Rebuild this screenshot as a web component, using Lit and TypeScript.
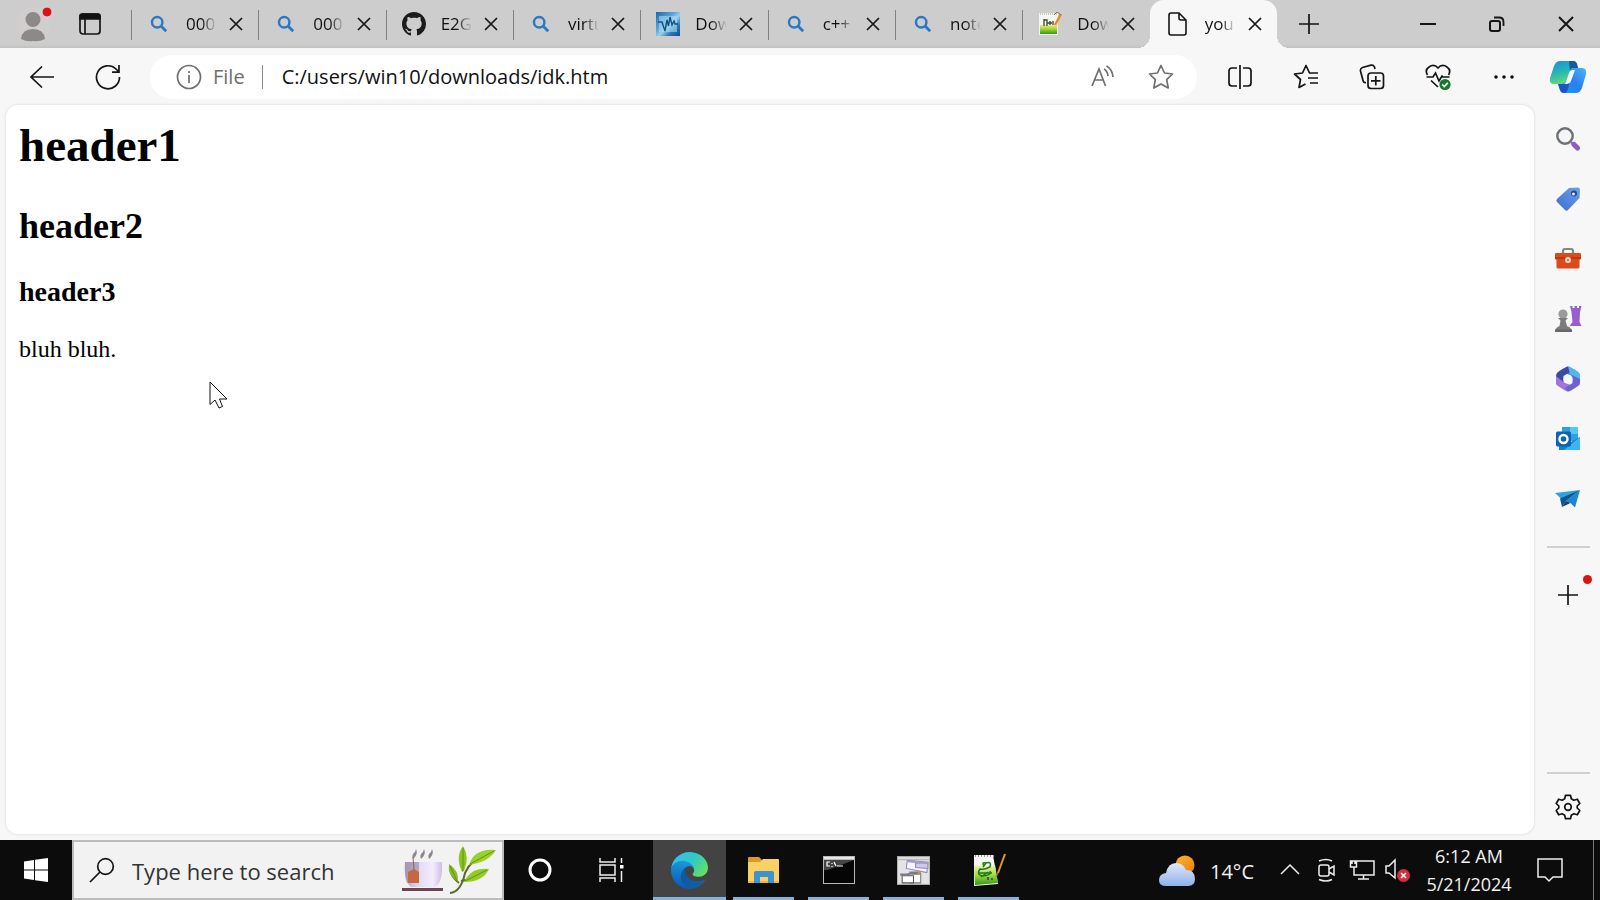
import { LitElement, html, css, svg, nothing, TemplateResult } from "lit";
import { customElement, property } from "lit/decorators.js";

const icon = (size: number, box: string, body: unknown, cls = "line") =>
  html`<svg class=${cls} width=${size} height=${size} viewBox=${box} aria-hidden="true">${body}</svg>`;

const closeIcon = icon(14, "0 0 14 14", svg`<path d="M1 1L13 13M13 1L1 13"/>`);

const searchFav = icon(18, "0 0 20 20", svg`
  <circle cx="8" cy="8" r="5.800" fill="none" stroke="#2b78c5" stroke-width="2.700"/>
  <path d="M12 12L18 18" stroke="#2b78c5" stroke-width="3.200"/>`, "art");

const githubFav = icon(24, "0 0 16 16", svg`
  <path fill="#1b1b1b" d="M8 0C3.58 0 0 3.58 0 8c0 3.54 2.29 6.53 5.47 7.59.4.07.55-.17.55-.38 0-.19-.01-.82-.01-1.49-2.01.37-2.53-.49-2.69-.94-.09-.23-.48-.94-.82-1.13-.28-.15-.68-.52-.01-.53.63-.01 1.08.58 1.23.82.72 1.21 1.87.87 2.33.66.07-.52.28-.87.51-1.07-1.78-.2-3.64-.89-3.64-3.95 0-.87.31-1.59.82-2.15-.08-.2-.36-1.02.08-2.12 0 0 .67-.21 2.2.82.64-.18 1.32-.27 2-.27s1.36.09 2 .27c1.53-1.04 2.2-.82 2.2-.82.44 1.1.16 1.92.08 2.12.51.56.82 1.27.82 2.15 0 3.07-1.87 3.75-3.65 3.95.29.25.54.73.54 1.48 0 1.07-.01 1.93-.01 2.2 0 .21.15.46.55.38A8.01 8.01 0 0 0 16 8c0-4.42-3.58-8-8-8z"/>`, "art");

const waveFav = icon(24, "0 0 24 24", svg`
  <defs><linearGradient id="w" x1="0" y1="0" x2="1" y2="1">
    <stop offset="0" stop-color="#1a66a4"/><stop offset=".4" stop-color="#5ba7dc"/>
    <stop offset=".55" stop-color="#9ad0ee"/><stop offset=".75" stop-color="#2a78b8"/><stop offset="1" stop-color="#174f8c"/>
  </linearGradient></defs>
  <rect width="24" height="24" fill="url(#w)"/>
  <rect x="3" y="4" width="18" height="16" fill="#a8daf0" opacity=".6"/>
  <path d="M2 10H6L9 19L11 8L12.500 14L14 5L16 13L18 9L19 12H22" fill="none" stroke="#12527f" stroke-width="1.400"/>`, "art");

const notepadFav = icon(24, "0 0 24 24", svg`
  <defs><linearGradient id="n" x1="0" y1="0" x2="0" y2="1">
    <stop offset="0" stop-color="#e9f07c"/><stop offset=".5" stop-color="#9bd02c"/><stop offset="1" stop-color="#2f9a1c"/>
  </linearGradient></defs>
  <path d="M1 1H20V23H1z" fill="#f4f6f0"/>
  <path d="M2 13H19V22H2z" fill="url(#n)"/>
  <path d="M2 2H19" stroke="#999" stroke-width="1" stroke-dasharray="1 1"/>
  <path d="M6 14V7V8H9V14M9 11H14M12 9V13M15 9V13" fill="none" stroke="#3b4a30" stroke-width="1.300"/>
  <path d="M23 2L17 13" stroke="#e88b22" stroke-width="2.500"/>
  <path d="M16 3L19 0L23 3" stroke="#777" stroke-width="1" fill="none"/>`, "art");

const fileFav = icon(24, "0 0 24 24", svg`
  <path d="M5 1H13L20 8V21Q20 23 18 23H5Q3 23 3 21V3Q3 1 5 1zM13 1V6Q13 8 15 8H20" stroke-width="1.600"/>`);

interface Tab { title: string; fav: TemplateResult; active?: boolean; }
const TABS: Tab[] = [
  { title: "000", fav: searchFav },
  { title: "000", fav: searchFav },
  { title: "E2G", fav: githubFav },
  { title: "virtu", fav: searchFav },
  { title: "Dow", fav: waveFav },
  { title: "c++", fav: searchFav },
  { title: "note", fav: searchFav },
  { title: "Dow", fav: notepadFav },
  { title: "you", fav: fileFav, active: true },
];

const TOOLS = [
  { label: "Split screen", art: icon(26, "0 0 26 26", svg`
    <path d="M10 4H5Q2 4 2 7V19Q2 22 5 22H10M16 4H21Q24 4 24 7V19Q24 22 21 22H16M13 1V25"/>`) },
  { label: "Favorites", art: icon(26, "0 0 26 26", svg`
    <path stroke-linejoin="round" d="M16.500 9L13 1.500L9.500 9L1.500 10L7.500 15.500L6 23.500L12.500 20M16 9H25M15 14H25M17 19H25"/>`) },
  { label: "Collections", art: icon(26, "0 0 26 26", svg`
    <path d="M7 18.500Q4.500 19 4 16.500L1.500 7Q1 4.500 3.500 3.500L12 1.200Q14.500.800 15.500 3L16 5"/>
    <rect x="9" y="9" width="15.500" height="15.500" rx="3"/><path d="M16.800 12V21.500M12 16.800H21.500"/>`) },
  { label: "Browser essentials", art: icon(26, "0 0 26 26", svg`
    <path d="M2.500 11Q-.500 6 4 3Q9-.500 13 4Q17-.500 22 3Q26.500 6 23.500 11M1.500 13H8L10.500 9L14 17L17 12L18 13H24.500M6 16.500L13 23"/>
    <circle cx="20" cy="20.500" r="5.600" fill="#137a26" stroke="none"/><path d="M17.300 20.500L19.300 22.500L22.800 18.800" stroke="#fff"/>`) },
  { label: "Settings and more", art: icon(22, "0 0 22 22", svg`
    <g fill="#111" stroke="none"><circle cx="3" cy="11" r="1.800"/><circle cx="11" cy="11" r="1.800"/><circle cx="19" cy="11" r="1.800"/></g>`) },
];

const copilot = icon(38, "0 0 38 38", svg`
  <defs>
    <linearGradient id="ca" x1="0" y1="0" x2=".3" y2="1"><stop offset="0" stop-color="#1a8fd8"/><stop offset=".5" stop-color="#25b3b8"/><stop offset="1" stop-color="#5fd67c"/></linearGradient>
    <linearGradient id="cb" x1="1" y1="0" x2="0" y2="1"><stop offset="0" stop-color="#49b8f5"/><stop offset=".5" stop-color="#2b7df0"/><stop offset="1" stop-color="#1aa0ea"/></linearGradient>
  </defs>
  <path d="M11 3H24Q27 3 28 6L29 10H25Q22 10 21 13L17 24Q16 26 13 26H5Q0 26 1 20L5 8Q7 3 11 3z" fill="url(#ca)"/>
  <path d="M20 3H24Q27 3 28 6L29 10H25Q22 10 21 13Z" fill="#155a9c"/>
  <path d="M27 35H15Q12 35 11 32L9 26H13Q16 26 17 24L21 13Q22 10 25 10H33Q38 10 37 16L33 30Q31 35 27 35z" fill="url(#cb)"/>
  <path d="M11 32L9 26H13Q16 26 17 24L21 22L19 31Q18 35 15 35Q12 35 11 32z" fill="#1d55c9"/>
  <path d="M15 25.500Q16.500 25 17 24L20 15Q21 12 24 12H26L22 23Q21 26 17 26z" fill="#f4fbff"/>`, "art");

const SIDE = [
  { label: "Search", art: icon(26, "0 0 26 26", svg`
    <circle cx="10" cy="10" r="7.700" fill="#f3f5f8" stroke="#6f6f6f" stroke-width="2.400"/>
    <path d="M15.500 15.500L19 19" stroke="#888" stroke-width="2.500"/>
    <path d="M19 18.500L22.500 22" stroke="#8a5cc8" stroke-width="5" stroke-linecap="round"/>`, "art") },
  { label: "Shopping", art: icon(26, "0 0 26 26", svg`
    <defs><linearGradient id="t" x1="1" y1="0" x2="0" y2="1"><stop offset="0" stop-color="#6da2ea"/><stop offset="1" stop-color="#3c6bd0"/></linearGradient></defs>
    <path d="M14 2L23 1.500Q25 1.500 25 4L24.500 12L13 24Q11.500 25.500 10 24L2 16Q.500 14.500 2 13z" fill="url(#t)"/>
    <circle cx="19" cy="7.500" r="3" fill="#20488c"/><circle cx="18.500" cy="8" r="1.500" fill="#e8f0fa"/>`, "art") },
  { label: "Tools", art: icon(28, "0 0 28 28", svg`
    <path d="M9 9V6Q9 4 11 4H17Q19 4 19 6V9" fill="none" stroke="#858585" stroke-width="2.200"/>
    <path d="M1 9Q1 8 2 8H26Q27 8 27 9V14L25.500 15V22Q25.500 23.500 24 23.500H4Q2.500 23.500 2.500 22V15L1 14z" fill="#db4a1b"/>
    <path d="M1 13L27 13" stroke="#b53211" stroke-width="1.500"/><circle cx="14" cy="15" r="3" fill="#f5d8cc"/><circle cx="14" cy="15" r="1.200" fill="#d07a5c"/>`, "art") },
  { label: "Games", art: icon(28, "0 0 28 28", svg`
    <path d="M16 1H18.500V3H20.500V1H23V3H25V1H27.500L26 7L25.500 17L27.500 21H15.500L18.500 17L17.500 7z" fill="#9760cf"/>
    <circle cx="9" cy="9" r="4.600" fill="#9b9b9b"/><path d="M4 13H14L11.500 15.500L13 21Q18 23 18 26.500H1Q1 23 5.500 21L6.500 15.500z" fill="#7c7c7c"/>
    <path d="M1 24.500H18V27H1z" fill="#686868"/>`, "art") },
  { label: "Microsoft 365", art: icon(26, "0 0 26 26", svg`
    <path d="M13 .500Q15 .500 23 6Q25 7.500 25 10V17L17.500 13L13 8.500L8 3z" fill="#3b8fe0"/>
    <path d="M13 .500Q11 .500 3 6Q1 7.500 1 10V18L8.500 20L8.500 10L17 5z" fill="#3d49a5"/>
    <path d="M1 10V17Q1 19 3 20Q11 25.500 13 25.500L21 21L9 16.500z" fill="#a273dc"/>
    <path d="M25 10V17Q25 19 23 20Q15 25.500 13 25.500L10 22L17.500 17V8z" fill="#6c63cf"/>
    <path d="M13 .500Q15 .500 23 6Q25 7.500 25 10V13L15 8z" fill="#57b5e9"/>
    <circle cx="13" cy="13" r="4.600" fill="#f7f7f7"/>`, "art") },
  { label: "Outlook", art: icon(26, "0 0 26 26", svg`
    <path d="M7 1H23V15H7z" fill="#2aa3e0"/><path d="M15 1H23V8H15z" fill="#58c6f2"/>
    <path d="M4 12L14 17L25 11V24H4z" fill="#1b7dc8"/><path d="M25 11V24H9z" fill="#3fb5ec"/>
    <rect x="1" y="5.500" width="15" height="15" rx="1.500" fill="#0f62b5"/>
    <circle cx="8.500" cy="13" r="4" fill="none" stroke="#fff" stroke-width="2.400"/>`, "art") },
  { label: "Drop", art: icon(26, "0 0 26 26", svg`
    <path d="M0 7L25 4L8 14.500z" fill="#2ba4e0"/><path d="M25 4L20 21.500L15.500 17L11 15z" fill="#1c86cf"/>
    <path d="M25 4L5 12.500L7 21L11 15z" fill="#0e5595"/><path d="M7 21L11 15L15.500 17z" fill="#123f74"/>`, "art") },
];

const plusIcon = icon(20, "0 0 20 20", svg`<path d="M10 0V20M0 10H20"/>`);

const gearIcon = icon(26, "0 0 26 26", svg`
  <path stroke-linejoin="round" d="M10.500 1.300H15.500L16.300 4.800L18.800 6.200L22.300 5.200L24.800 9.500L22.200 12V14L24.800 16.500L22.300 20.800L18.800 19.800L16.300 21.200L15.500 24.700H10.500L9.700 21.200L7.200 19.800L3.700 20.800L1.200 16.500L3.800 14V12L1.200 9.500L3.700 5.200L7.200 6.200L9.700 4.800z"/>
  <circle cx="13" cy="13" r="3.300"/>`);

const edgeArt = icon(37, "0 0 256 256", svg`
  <defs>
    <linearGradient id="e1" x1="0" y1="0" x2="1" y2="0"><stop offset="0" stop-color="#0c59a4"/><stop offset="1" stop-color="#1560a8"/></linearGradient>
    <linearGradient id="e2" x1=".5" y1="0" x2=".4" y2="1"><stop offset="0" stop-color="#1b9de2"/><stop offset="1" stop-color="#0b57b0"/></linearGradient>
    <linearGradient id="e3" x1="0" y1=".2" x2="1" y2=".7"><stop offset="0" stop-color="#35c1f1"/><stop offset=".5" stop-color="#2fc8c8"/><stop offset="1" stop-color="#66df62"/></linearGradient>
  </defs>
  <path fill="url(#e1)" d="M231.070 190.540a93.620 93.620 0 0 1-10.540 4.710 101.870 101.870 0 0 1-35.900 6.460c-47.320 0-88.540-32.550-88.540-74.320A31.480 31.480 0 0 1 112.550 100c-42.800 1.800-53.800 46.400-53.800 72.530 0 73.880 68.090 81.370 82.760 81.370 7.910 0 19.840-2.300 27-4.560l1.310-.440a128.340 128.340 0 0 0 66.600-52.800 4 4 0 0 0-5.350-5.560z"/>
  <path fill="url(#e2)" d="M105.730 241.420A79.200 79.200 0 0 1 83 220.080 80.720 80.720 0 0 1 112.480 100.020c3.120-1.470 8.450-4.130 15.540-4a32.350 32.350 0 0 1 25.690 13 31.880 31.880 0 0 1 6.360 18.660c0-.210 24.460-79.600-80-79.600-43.900 0-80 41.660-80 78.210a130.150 130.150 0 0 0 12.110 56 128 128 0 0 0 156.380 67.110 75.550 75.550 0 0 1-62.780-8z"/>
  <path fill="url(#e3)" d="M152.330 148.860c-.810 1.050-3.300 2.500-3.300 5.660 0 2.610 1.700 5.120 4.720 7.230 14.380 10 41.490 8.680 41.560 8.680a59.560 59.560 0 0 0 30.270-8.350A61.380 61.380 0 0 0 256 109.180c.260-22.410-8-37.310-11.340-43.910C223.460 23.840 177.720 0 128 0A128 128 0 0 0 0 126.200c.480-36.540 36.800-66.050 80-66.050 3.500 0 23.460.340 42 10.070 16.340 8.580 24.900 18.940 30.850 29.210 6.180 10.670 7.280 24.150 7.280 29.520s-2.740 13.330-7.800 19.910z"/>`, "art");

interface App { label: string; art: TemplateResult; state?: "open" | "active"; }
const APPS: App[] = [
  { label: "Cortana", art: icon(26, "0 0 26 26", svg`<circle cx="13" cy="13" r="10" fill="none" stroke="#fff" stroke-width="3"/>`, "art") },
  { label: "Task View", art: icon(32, "0 0 32 32", svg`
    <g fill="none" stroke="#eee" stroke-width="1.500"><path d="M4 4V8H19V4M4 28V24H19V28M4 11H19V21H4zM25.500 4V9M25.500 17V28"/></g>
    <path d="M24 11H27.500V14.500H24z" fill="#fff"/>`, "art") },
  { label: "Microsoft Edge", art: edgeArt, state: "active" },
  { label: "File Explorer", art: icon(32, "0 0 32 32", svg`
    <path d="M0 4Q0 3 1 3H11L14 6V12H0z" fill="#dd9a1e"/>
    <path d="M0 8H12L15 5H30Q31 5 31 6V28Q31 29 30 29H1Q0 29 0 28z" fill="#fbd064"/>
    <path d="M0 28H31" stroke="#f0b93e" stroke-width="2"/>
    <path d="M6 29V19Q6 17 8 17H24Q26 17 26 19V29H20V23H12V29z" fill="#3e93d4"/>`, "art"), state: "open" },
  { label: "Command Prompt", art: icon(32, "0 0 32 32", svg`
    <rect x="0" y="2" width="32" height="28" fill="#b9b9b9"/><path d="M1 3H31V5H1z" fill="#e8e8e8"/>
    <path d="M1 6H31V29H1z" fill="#050505"/><path d="M1 6H31L5 16H1z" fill="#444"/>
    <path d="M7 8H4V12H7M9 9V10M9 12V13M11 8L13 12M14 12H20" fill="none" stroke="#fff" stroke-width="1.200"/>`, "art"), state: "open" },
  { label: "Window manager", art: icon(33, "0 0 32 32", svg`
    <rect x="0" y="2" width="32" height="28" fill="#b4b4b4"/><path d="M1 6H31V29H1z" fill="#e4e4e8"/><path d="M1 3H31V5H1z" fill="#dedede"/>
    <path d="M10 6L30 8L29 18L9 14z" fill="#f4f4ff" stroke="#9088b8"/><path d="M18 9L30 8V14L18 13z" fill="#cfc9ea" stroke="#9088b8"/><path d="M10 6L30 8V10L10 8z" fill="#a49ccc"/>
    <path d="M11 19H23V28H13z" fill="#fff" stroke="#777"/><path d="M5 21H16V28H5z" fill="#fff" stroke="#555"/>
    <path d="M3 19H12V21H3zM12 17H23V20H12z" fill="#7a7a8a"/><path d="M20 17H23V20H20z" fill="#c49a2c"/>`, "art"), state: "open" },
  { label: "Notepad++", art: icon(34, "0 0 34 34", svg`
    <defs><linearGradient id="np" x1="0" y1="0" x2="0" y2="1"><stop offset="0" stop-color="#f0f5c0"/><stop offset=".5" stop-color="#a5d93c"/><stop offset="1" stop-color="#2d9a1e"/></linearGradient></defs>
    <path d="M2 2H21L26 31L2 33z" fill="#f5f8ee"/><path d="M2 12H23L26 30L3 32z" fill="url(#np)"/>
    <path d="M3 3H22" stroke="#999" stroke-width="2" stroke-dasharray="1 2"/>
    <path d="M12 13Q9 9 14 10Q20 8 18 14Q12 17 8 16Q4 22 11 23Q20 22 18 18M7 20H20M9 24L16 19M14 10L11 14" fill="none" stroke="#1e7a20" stroke-width="1.500"/>
    <path d="M16 27V24M20 27V25" stroke="#245" stroke-width="1.500"/>
    <path d="M33 1L26 20" stroke="#e29a2a" stroke-width="2"/><path d="M26 20L24 24" stroke="#a75" stroke-width="1.200"/>`, "art"), state: "open" },
];

const reset = css`
  button, input { font: inherit; color: inherit; border: 0; background: none; padding: 0; margin: 0; outline: 0; }
  button { display: flex; align-items: center; justify-content: center; flex: none; }
  svg { display: block; flex: none; }
  .line { fill: none; stroke: #151515; stroke-width: 1.7; }
  .thin { fill: none; stroke: #eee; stroke-width: 1.5; }
  .hidden { position: absolute; width: 1px; height: 1px; overflow: hidden; clip-path: inset(50%); }
`;

@customElement("tab-strip")
class TabStrip extends LitElement {
  @property({ attribute: false }) tabs: Tab[] = [];
  static styles = [reset, css`
    :host { display: flex; align-items: stretch; height: 48px; background: #cdcdcd; box-shadow: inset 0 -3px 3px -2px #bdbdbd; }
    .profile { width: 66px; }
    .actions { width: 48px; margin-right: 17px; }
    .tabs { flex: 1; min-width: 0; display: flex; }
    .tab { position: relative; flex: 1 1 0; min-width: 0; display: flex; align-items: center; gap: 6px; padding: 0 9px 0 16px; }
    .tab::before { content: ""; position: absolute; left: 0; top: 10px; width: 1px; height: 30px; background: #808080; }
    .tab.active { background: #f7f7f7; border-radius: 14px 14px 0 0; }
    .tab.active::before, .tab.active::after { top: auto; bottom: 0; width: 12px; height: 12px; content: ""; position: absolute; }
    .tab.active::before { left: -12px; background: radial-gradient(circle at 0 0, transparent 12px, #f7f7f7 12px); }
    .tab.active::after { right: -12px; background: radial-gradient(circle at 100% 0, transparent 12px, #f7f7f7 12px); }
    .go { flex: 1; min-width: 0; justify-content: flex-start; gap: 15px; height: 48px; }
    .fav { width: 24px; display: flex; justify-content: center; flex: none; }
    .title { flex: 1; min-width: 0; overflow: hidden; white-space: nowrap; text-align: left; font-size: 17px; line-height: 28px;
      -webkit-mask-image: linear-gradient(90deg, #000 50%, transparent); mask-image: linear-gradient(90deg, #000 50%, transparent); }
    .close { width: 26px; height: 26px; }
    .new { width: 64px; }
    .drag { width: 52px; }
    .win { width: 69px; }
  `];
  render() {
    return html`
      <button class="profile" aria-label="Profile">${icon(40, "0 0 40 40", svg`
        <circle cx="20" cy="20" r="17" fill="#d1cfcd"/><circle cx="20" cy="15.500" r="7.500" fill="#8c8988"/>
        <path d="M8 35Q9 25 20 25Q31 25 32 35Q26 38 20 37Q14 38 8 35z" fill="#8c8988"/>
        <circle cx="34" cy="8" r="5" fill="#d81313" stroke="#dcdcdc"/>`, "art")}</button>
      <button class="actions" aria-label="Tab actions">${icon(22, "0 0 22 22", svg`
        <rect x="1" y="1" width="20" height="20" rx="3"/><path d="M1 6V3Q1 1 3 1H19Q21 1 21 3V6z" fill="#111"/><path d="M6 6V21"/>`)}</button>
      <div class="tabs">
        ${this.tabs.map(t => html`<div class="tab ${t.active ? "active" : ""}">
          <button class="go" aria-current=${t.active ? "page" : nothing}><span class="fav">${t.fav}</span><span class="title">${t.title}</span></button>
          <button class="close" aria-label="Close tab">${closeIcon}</button>
        </div>`)}
      </div>
      <button class="new" aria-label="New tab">${plusIcon}</button>
      <div class="drag"></div>
      <button class="win" aria-label="Minimize">${icon(16, "0 0 16 16", svg`<path d="M0 8H16" stroke-width="2"/>`)}</button>
      <button class="win" aria-label="Restore">${icon(16, "0 0 16 16", svg`
        <rect x="1" y="5" width="10" height="10" rx="2" stroke-width="2"/><path d="M5 1.500H10Q14.500 1.500 14.500 6V10" stroke-width="1.800"/>`)}</button>
      <button class="win" aria-label="Close">${icon(16, "0 0 16 16", svg`<path d="M1 1L15 15M15 1L1 15" stroke-width="2"/>`)}</button>`;
  }
}

@customElement("tool-bar")
class ToolBar extends LitElement {
  static styles = [reset, css`
    :host { display: flex; align-items: center; height: 57px; background: #f7f7f7; padding-left: 9px; }
    .tool { width: 66px; height: 44px; }
    .pill { flex: 1; min-width: 0; height: 44px; margin: 0 10px 0 9px; border-radius: 22px; background: #fff; display: flex; align-items: center; padding-left: 26px; color: #6f6f6f; }
    .pill .line { stroke: #6f6f6f; }
    .file { margin-left: 11px; font-size: 20px; line-height: 28px; }
    .bar { width: 1px; height: 24px; background: #8a8a8a; margin: 0 19px 0 17px; }
    .url { flex: 1; min-width: 0; color: #111; font-size: 20px; line-height: 28px; }
    .in { width: 58px; height: 44px; }
    .last { margin-right: 7px; }
    .copilot { width: 63px; padding-right: 2px; }
  `];
  render() {
    return html`
      <button class="tool" aria-label="Back">${icon(26, "0 0 26 26", svg`<path d="M13 2.500L2 13L13 23.500M2 13H25"/>`)}</button>
      <button class="tool" aria-label="Refresh">${icon(26, "0 0 26 26", svg`<path d="M24.500 13A11.500 11.500 0 1 1 21 5L24 8M24 1V8.200H17"/>`)}</button>
      <div class="pill">
        ${icon(26, "0 0 26 26", svg`<circle cx="13" cy="13" r="11.500"/><path d="M13 11V19M13 7V9"/>`)}
        <label class="file" for="url">File</label><span class="bar"></span>
        <input id="url" class="url" value="C:/users/win10/downloads/idk.htm">
        <button class="in" aria-label="Read aloud">${icon(24, "0 0 24 24", svg`
          <path d="M1 21L8 4L14.500 21M3.500 15H12M13 4Q16.500 6 17 11M15.500 1Q21.500 4.500 22 12"/>`)}</button>
        <button class="in last" aria-label="Add to favorites">${icon(26, "0 0 26 26", svg`
          <path stroke-linejoin="round" d="M13 1.500L16.500 9L24.500 10L18.700 15.700L20.200 24L13 20L5.800 24L7.300 15.700L1.500 10L9.500 9z"/>`)}</button>
      </div>
      ${TOOLS.map(t => html`<button class="tool" aria-label=${t.label}>${t.art}</button>`)}
      <button class="copilot" aria-label="Copilot">${copilot}</button>`;
  }
}

@customElement("side-bar")
class SideBar extends LitElement {
  static styles = [reset, css`
    :host { display: flex; flex-direction: column; width: 63px; padding: 4px 0 3px; box-sizing: border-box; }
    button { position: relative; height: 60px; padding-right: 2px; }
    hr { margin: 17px 10px; width: 43px; height: 2px; border: 0; background: #d0d0d0; flex: none; box-sizing: border-box; }
    .fill { flex: 1; }
    .low { margin: 0 10px 3px; }
    .dot { position: absolute; right: 8px; top: 10px; width: 9px; height: 9px; border-radius: 50%; background: #d81313; }
  `];
  render() {
    return html`${SIDE.map(s => html`<button aria-label=${s.label}>${s.art}</button>`)}
      <hr><button aria-label="Customize">${plusIcon}<span class="dot"></span></button>
      <div class="fill"></div><hr class="low">
      <button aria-label="Settings">${gearIcon}</button>`;
  }
}

@customElement("task-bar")
class TaskBar extends LitElement {
  static styles = [reset, css`
    :host { display: flex; align-items: stretch; height: 60px; background: #0c0c0c; color: #f2f2f2; }
    .start, .app { width: 72px; }
    .search { width: 432px; box-sizing: border-box; display: flex; align-items: center; background: #f2f2f2; border: 2px solid #bcbcbc; padding: 0 5px 0 15px; color: #333; }
    .search input { flex: 1; min-width: 0; margin-left: 17px; padding-top: 2px; font-size: 22px; line-height: 32px; }
    .search input::placeholder { color: #333; opacity: 1; }
    .app { position: relative; }
    .app.active { width: 73px; margin-left: 5px; background: #434343; }
    .app.open { width: 75px; }
    .app.open::after, .app.active::after { content: ""; position: absolute; left: 7px; right: 7px; bottom: 0; height: 3px; background: #86b3da; }
    .app.active::after { left: 0; right: 0; }
    .fill { flex: 1; }
    .weather { gap: 14px; margin-right: 18px; font-size: 20px; line-height: 28px; }
    .weather span { padding-top: 3px; }
    .tray { width: 36px; }
    .clock { width: 106px; flex-direction: column; font-size: 18px; line-height: 28px; }
    .note { width: 56px; }
    .desk { width: 22px; justify-content: flex-end; }
    .desk::before { content: ""; width: 1px; height: 60px; margin-right: 6px; background: #777; }
  `];
  render() {
    return html`
      <button class="start" aria-label="Start">${icon(24, "0 0 24 24", svg`
        <path fill="#fff" d="M0 3.500L10 2V11.500H0zM11 1.800L24 0V11.500H11zM0 12.500H10V22L0 20.500zM11 12.500H24V24L11 22.200z"/>`, "art")}</button>
      <div class="search">
        ${icon(26, "0 0 26 26", svg`<circle cx="16.500" cy="9.500" r="7.800"/><path d="M11 15L1 25"/>`)}
        <label class="hidden" for="find">Search</label>
        <input id="find" placeholder="Type here to search">
        <svg width="96" height="50" viewBox="0 0 96 50" aria-hidden="true">
          <defs><linearGradient id="cup" x1="0" y1="0" x2="1" y2="0"><stop offset="0" stop-color="#b9a9c6"/><stop offset=".4" stop-color="#e4dcf2"/><stop offset=".75" stop-color="#f3ecfc"/><stop offset="1" stop-color="#cdbde6"/></linearGradient></defs>
          <path d="M12 14Q10 10 14 7L15 4Q17 8 14 12zM20 14Q18 10 22 7L23 4Q25 8 22 12zM28 14Q26 10 30 7L31 4Q33 8 30 12z" fill="#8d8792"/>
          <path d="M4 17H41Q42 38 34 42H10Q3 38 4 17z" fill="url(#cup)"/>
          <path d="M4 17H18V38H6Q3 30 4 17z" fill="#9d86a6" opacity=".6"/>
          <path d="M12 12L13 25" stroke="#8b6a66" fill="none"/><path d="M7 27L13 24L18 27V38H7z" fill="#c4683e"/>
          <path d="M1 43H42V46H1z" fill="#6d4456"/>
          <path d="M49 48Q60 47 64 28Q70 14 86 9M60 36Q72 34 78 28M58 38Q50 32 49 24" fill="none" stroke="#5c6a2c" stroke-width="2"/>
          <path d="M61 27Q54 12 62 1Q69 12 63 26z" fill="#8cc520"/>
          <path d="M68 20Q73 3 95 5Q88 17 68 20z" fill="#9ad22b"/>
          <path d="M63 37Q70 22 88 24Q82 37 63 37z" fill="#94cc26"/>
          <path d="M57 37Q46 30 48 19Q58 25 57 37z" fill="#86bd20"/>
          <path d="M62 26Q62 14 62 3M69 19L93 6M64 36L86 25M56 36L49 21" stroke="#5f9416" fill="none" stroke-width="1"/>
        </svg>
      </div>
      ${APPS.map(a => html`<button class="app ${a.state ?? ""}" aria-label=${a.label}>${a.art}</button>`)}
      <div class="fill"></div>
      <button class="weather">${icon(38, "0 0 38 38", svg`
        <defs><linearGradient id="cl" x1="0" y1="0" x2="0" y2="1"><stop offset="0" stop-color="#dfe9fb"/><stop offset="1" stop-color="#8fb0ea"/></linearGradient>
        <linearGradient id="su" x1="0" y1="0" x2="1" y2="1"><stop offset="0" stop-color="#fcb62c"/><stop offset="1" stop-color="#ee7b12"/></linearGradient></defs>
        <circle cx="27" cy="14" r="9.500" fill="url(#su)"/>
        <path d="M8 35Q1 35 1 29Q1 23 8 22Q10 12 18 12Q25 12 28 19Q37 19 37 28Q37 35 30 35z" fill="url(#cl)"/>`, "art")}<span>14°C</span></button>
      <button class="tray" aria-label="Show hidden icons">${icon(20, "0 0 20 20", svg`<path d="M1 14L10 5L19 14"/>`, "thin")}</button>
      <button class="tray" aria-label="Meet now">${icon(24, "0 0 24 24", svg`
        <rect x="5" y="7" width="10" height="11" rx="2"/><path d="M15 11L20 8V17L15 14M5 3Q12 0 18 3M5 21.500Q12 24.500 18 21.500"/>`, "thin")}</button>
      <button class="tray" aria-label="Network">${icon(26, "0 0 26 26", svg`
        <path d="M8 4H25V18H5V10M9 22H20M14.500 18V22M1.500 4H7.500V10H1.500zM3 4V7M6 4V7"/>`, "thin")}</button>
      <button class="tray" aria-label="Volume">${icon(26, "0 0 26 26", svg`
        <path d="M1 9H4L10 3V21L4 16H1z"/>
        <circle cx="18.500" cy="18.500" r="6.500" fill="#d32f3c" stroke="none"/><path d="M16 16L21 21M21 16L16 21" stroke="#fff"/>`, "thin")}</button>
      <button class="clock"><span>6:12 AM</span><span>5/21/2024</span></button>
      <button class="note" aria-label="Notifications">${icon(26, "0 0 26 26", svg`<path d="M1 2H25V20H16L12 24L8 20H1z"/>`, "thin")}</button>
      <button class="desk" aria-label="Show desktop"></button>`;
  }
}

@customElement("app-root")
class AppRoot extends LitElement {
  static styles = css`
    :host { display: flex; flex-direction: column; height: 100vh; overflow: hidden; background: #f7f7f7; font-family: "Open Sans", "Noto Sans", sans-serif; color: #111; }
    .middle { flex: 1; min-height: 0; display: flex; }
    .page { position: relative; flex: 1; min-width: 0; margin: 0 3px 6px 6px; padding: 13px; background: #fff; border-radius: 12px; box-shadow: 0 0 3px #d4d4d4; font-family: "Liberation Serif", serif; color: #000; }
    h1, h2, h3, p { margin: 0; }
    h1 { font-size: 47px; line-height: 54px; margin-bottom: 34px; }
    h2 { font-size: 36px; line-height: 40px; margin-bottom: 30px; }
    h3 { font-size: 28px; line-height: 32px; margin-bottom: 27px; }
    p { font-size: 24px; line-height: 28px; }
    .pointer { position: absolute; left: 203px; top: 276px; }
  `;
  render() {
    return html`
      <tab-strip .tabs=${TABS}></tab-strip>
      <tool-bar></tool-bar>
      <div class="middle">
        <main class="page">
          <h1>header1</h1><h2>header2</h2><h3>header3</h3><p>bluh bluh.</p>
          <svg class="pointer" width="20" height="28" viewBox="0 0 20 28" aria-hidden="true">
            <path d="M1 1V23.500L6 19L10 27L13.500 25.500L10.500 18H18z" fill="#fff" stroke="#111" stroke-width="1"/></svg>
        </main>
        <side-bar></side-bar>
      </div>
      <task-bar></task-bar>`;
  }
}
